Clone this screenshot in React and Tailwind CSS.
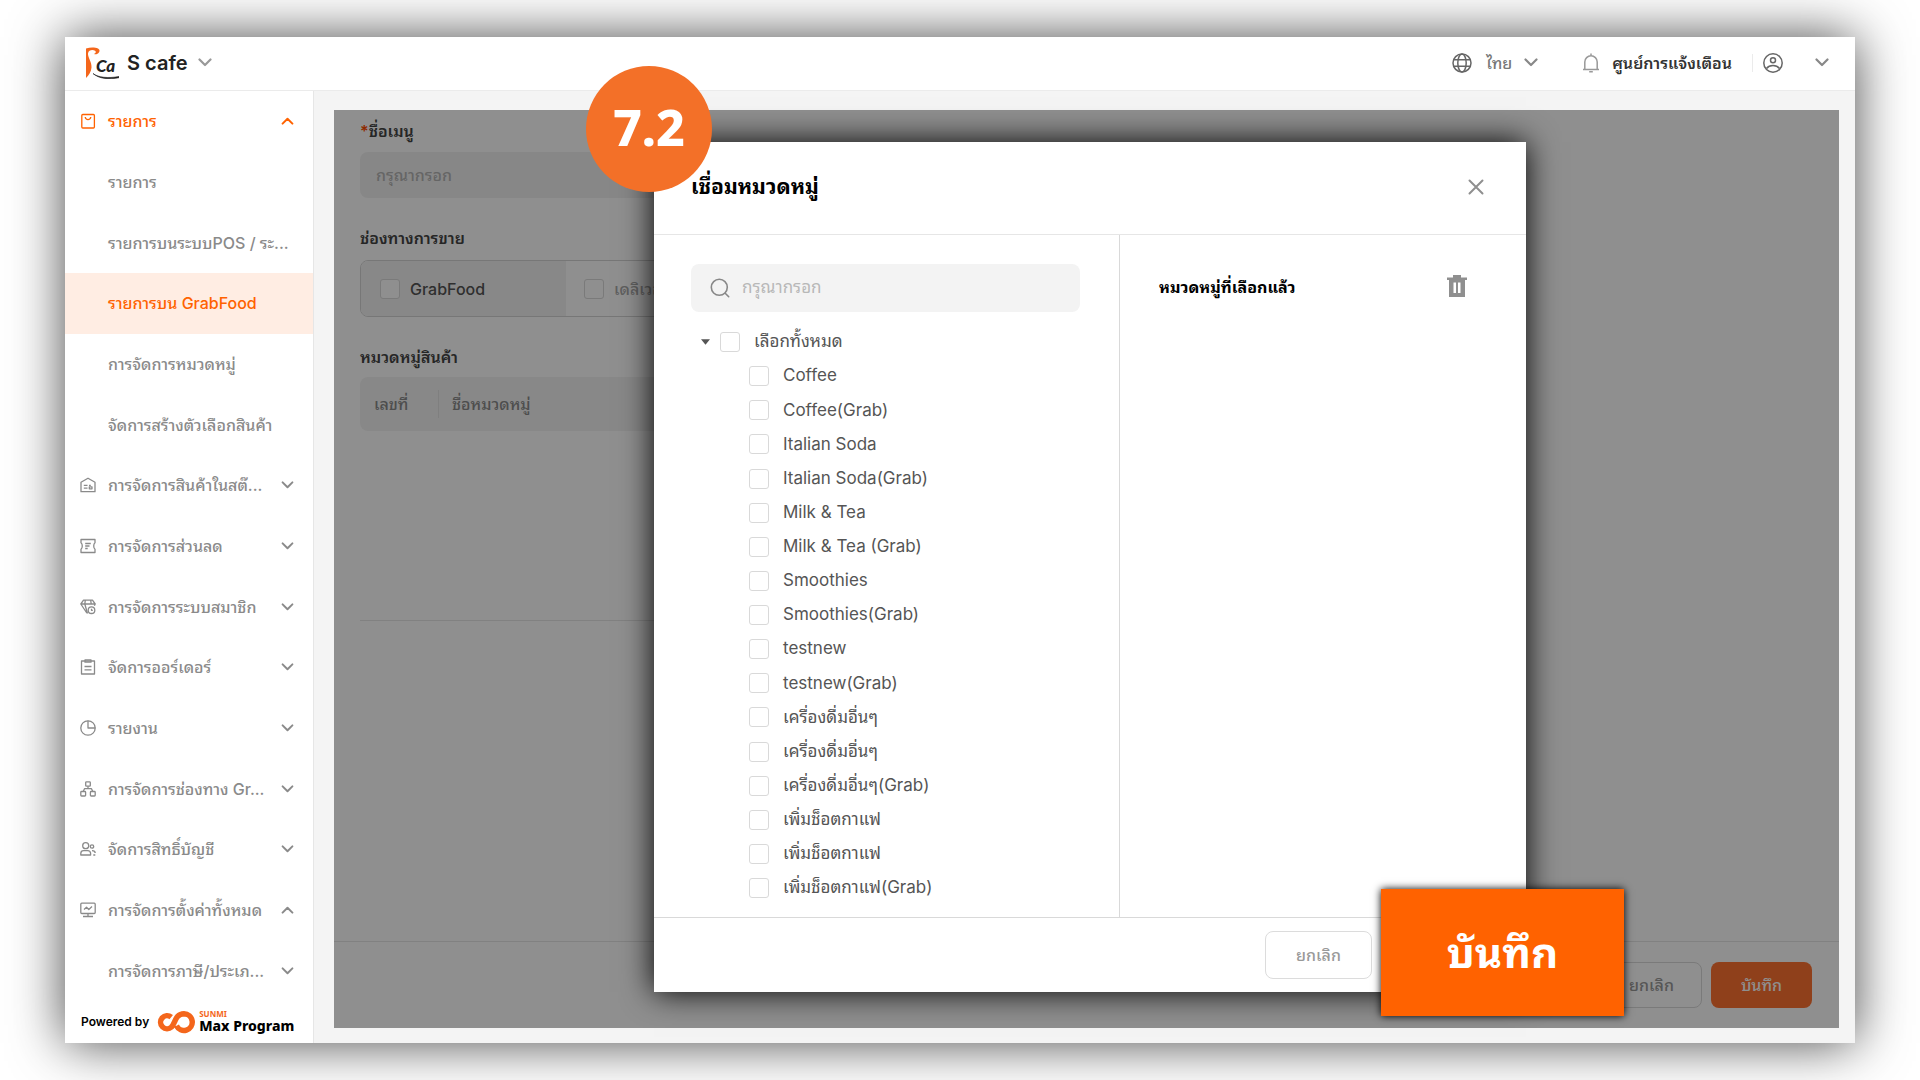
import React, { useState } from "react";

const chevronUp = "M1.5 7.5 7 2l5.5 5.5";
const chevronDown = "M1.5 1.5 7 7l5.5-5.5";

function Chevron({ up = false, className = "h-[9px] w-[14px]" }) {
  return (
    <svg viewBox="0 0 14 9" fill="none" stroke="currentColor" strokeWidth="2.2" strokeLinecap="round" strokeLinejoin="round" className={`shrink-0 ${className}`}>
      <path d={up ? chevronUp : chevronDown} />
    </svg>
  );
}

const icons = {
  bag: (
    <>
      <rect x="1.8" y="1.5" width="12.6" height="13.5" rx="1" />
      <path d="M5.2 4c.3 1.900 1.300 2.600 2.800 2.600s2.500-.7 2.800-2.600" />
    </>
  ),
  store: (
    <>
      <path d="M1 14.700V5.300L8 1.200l7 4.100v9.400z" />
      <path d="M3.800 8.300h3.700M3.800 11.200h3.700M9 8.300h1.800M9.300 9.900h2.700v1.900H9.300z" />
    </>
  ),
  coupon: (
    <>
      <path d="M1 1.500h14v3.300c-1.700 1.200-1.700 5.200 0 6.400v3.300H1v-3.300c1.700-1.200 1.700-5.200 0-6.400z" />
      <path d="M5.200 5.500h5.600M5.200 8h4.300M5.200 10.500h2.500" />
    </>
  ),
  member: (
    <>
      <path d="M3.500 1.200h9L15.200 5H.8zM.8 5l6 9M5.300 1.200 4.800 5l2.700 9.500M10.700 1.200l.5 3.800M15.200 5l-.8 1.700" />
      <circle cx="11.500" cy="11.200" r="3.300" />
      <path d="M11.500 9.800v1.500h1.300" />
    </>
  ),
  order: (
    <>
      <path d="M1.500 2h13v13h-13z" />
      <path d="M5 .8h6v2.400H5zM4.500 7.500h7M4.500 10.800h7" />
    </>
  ),
  report: (
    <>
      <circle cx="8" cy="8" r="7.200" />
      <path d="M8 .8V8h7.200" />
    </>
  ),
  channel: (
    <>
      <rect x="5.700" y=".8" width="4.600" height="4.400" rx=".8" />
      <rect x=".8" y="10.500" width="4.800" height="4.500" rx=".8" />
      <rect x="10.400" y="10.500" width="4.800" height="4.500" rx=".8" />
      <path d="M8 5.200v2.500M3.200 10.500l1.300-2.800h7l1.300 2.800" />
    </>
  ),
  account: (
    <>
      <circle cx="5.700" cy="4.700" r="3" />
      <path d="M.8 14v-1.500c0-1.800 1.200-2.800 2.800-2.800h4.200c1.600 0 2.800 1 2.800 2.800V14z" />
      <circle cx="12" cy="5.500" r="1.700" />
      <path d="M12 9.700c2 0 3.200.8 3.200 2.300M13.300 14h2" />
    </>
  ),
  monitor: (
    <>
      <rect x=".8" y="1.200" width="14.400" height="10.300" rx="1" />
      <path d="m4 7.500 2.500-2.300 2.300 2.300L12 4.500M8 11.500v2.800M3 14.500h10" />
    </>
  ),
};

const menu = [
  { icon: "bag", label: "รายการ", arrow: "up", active: true },
  { label: "รายการ" },
  { label: "รายการบนระบบPOS / ระ..." },
  { label: "รายการบน GrabFood", active: true, selected: true },
  { label: "การจัดการหมวดหมู่" },
  { label: "จัดการสร้างตัวเลือกสินค้า" },
  { icon: "store", label: "การจัดการสินค้าในสต๊...", arrow: "down" },
  { icon: "coupon", label: "การจัดการส่วนลด", arrow: "down" },
  { icon: "member", label: "การจัดการระบบสมาชิก", arrow: "down" },
  { icon: "order", label: "จัดการออร์เดอร์", arrow: "down" },
  { icon: "report", label: "รายงาน", arrow: "down" },
  { icon: "channel", label: "การจัดการช่องทาง Gr...", arrow: "down" },
  { icon: "account", label: "จัดการสิทธิ์บัญชี", arrow: "down" },
  { icon: "monitor", label: "การจัดการตั้งค่าทั้งหมด", arrow: "up" },
  { label: "การจัดการภาษี/ประเภ...", arrow: "down" },
];

const categories = [
  "Coffee",
  "Coffee(Grab)",
  "Italian Soda",
  "Italian Soda(Grab)",
  "Milk & Tea",
  "Milk & Tea (Grab)",
  "Smoothies",
  "Smoothies(Grab)",
  "testnew",
  "testnew(Grab)",
  "เครื่องดื่มอื่นๆ",
  "เครื่องดื่มอื่นๆ",
  "เครื่องดื่มอื่นๆ(Grab)",
  "เพิ่มช็อตกาแฟ",
  "เพิ่มช็อตกาแฟ",
  "เพิ่มช็อตกาแฟ(Grab)",
];

const checkbox =
  "h-5 w-5 shrink-0 appearance-none rounded-[3px] border border-[#d9d9d9] bg-white checked:border-[#ff6200] checked:bg-[#ff6200]";

function Header() {
  return (
    <header className="flex h-[54px] shrink-0 items-center border-b border-[#ebebeb] bg-white pr-[26px] pb-0.5 pl-5">
      <svg viewBox="0 0 34 32" className="h-8 w-[34px]" aria-label="S Ca">
        <path d="M1 1.500C5 .2 10 .2 13 1.500c2 1 2 3 .5 4.500-1.200 1.200-3 1.500-4.500 1 1.800-.8 2.500-2.300 1-3.300C7.500 2.500 3.500 3 3 6.500c-.3 4 4 8.500 3.500 14C6.200 25 4 28 1 31z" fill="#f4661b" />
        <text x="11" y="25" fontSize="17" fontWeight="900" fontStyle="italic" fontFamily="Lato, sans-serif" fill="#222">Ca</text>
        <path d="M8 26.500c5 4 15 5 26 3v1.200c-10 2-20 1.200-26-4.200z" fill="#222" stroke="#222" strokeWidth=".6" />
      </svg>
      <button className="ml-2 flex items-center gap-2.5 text-xl font-semibold text-[#222]">
        S cafe
        <Chevron className="h-[9px] w-[14px] text-[#999]" />
      </button>

      <button className="ml-auto flex items-center text-base font-medium text-[#777]">
        <svg viewBox="0 0 20 20" fill="none" stroke="#666" strokeWidth="1.500" className="mr-3.5 h-5 w-5">
          <circle cx="10" cy="10" r="9" />
          <ellipse cx="10" cy="10" rx="4.200" ry="9" />
          <path d="M1.700 6.800h16.600M1.700 13.200h16.600" />
        </svg>
        ไทย
        <Chevron className="ml-3 h-[9px] w-[14px] text-[#888]" />
      </button>
      <button className="ml-11 flex items-center gap-3 text-base font-semibold text-[#333]">
        <svg viewBox="0 0 18 20" fill="none" stroke="#999" strokeWidth="1.500" className="h-5 w-[18px]">
          <path d="M1 16.500h16M2.800 16.500V9a6.200 6.200 0 0 1 12.400 0v7.500M9 .5v2M7.200 18.800h3.600" />
        </svg>
        ศูนย์การแจ้งเตือน
      </button>
      <span className="ml-5 h-[18px] w-px bg-[#ebebeb]" />
      <button className="ml-2.5 flex items-center gap-8" aria-label="account">
        <svg viewBox="0 0 20 20" fill="none" stroke="#666" strokeWidth="1.500" className="h-5 w-5">
          <circle cx="10" cy="10" r="9.200" />
          <circle cx="10" cy="7.300" r="2.500" />
          <path d="M3.500 15.500c1.500-2 3.500-3 6.500-3s5 1 6.500 3" />
        </svg>
        <Chevron className="h-[9px] w-[14px] text-[#888]" />
      </button>
    </header>
  );
}

function Sidebar() {
  return (
    <aside className="flex w-[249px] shrink-0 flex-col border-r border-[#e6e6e6] bg-white">
      <nav className="flex flex-1 flex-col">
        {menu.map((item, i) => (
          <a
            key={i}
            href="#"
            className={`flex flex-1 items-center pr-[19px] pl-[15px] text-base font-medium whitespace-nowrap ${
              item.active ? "text-[#ff6200]" : "text-[#8a8a8a]"
            } ${item.selected ? "bg-[#ffede3]" : ""}`}
          >
            <span className="w-7 shrink-0">
              {item.icon && (
                <svg viewBox="0 0 16 16" fill="none" stroke="currentColor" strokeWidth="1.300" strokeLinejoin="round" className="h-4 w-4">
                  {icons[item.icon]}
                </svg>
              )}
            </span>
            <span className="flex-1">{item.label}</span>
            {item.arrow && <Chevron up={item.arrow === "up"} className="h-2 w-[13px]" />}
          </a>
        ))}
      </nav>
      <div className="flex h-[42px] items-center pl-4 text-xs font-semibold text-black">
        Powered by
        <svg viewBox="0 0 40 24" fill="none" stroke="#f4661b" strokeWidth="5.500" className="ml-2 h-6 w-10">
          <path d="M14.200 7.200A6.500 6.500 0 1 0 14.500 17C18.500 13 18 4 27 3.800a8.300 8.300 0 1 1-7.500 12" />
        </svg>
        <div className="ml-0.5 flex flex-col font-['Noto_Sans']">
          <span className="text-[8px] leading-2 font-bold text-[#f4661b]">SUNMI</span>
          <span className="text-sm leading-4 font-extrabold">Max Program</span>
        </div>
      </div>
    </aside>
  );
}

function MenuForm() {
  return (
    <form className="flex h-full flex-col text-base">
      <div className="w-[800px] flex-1 pt-2 pl-[26px]">
        <label htmlFor="menuName" className="block h-[34px] pt-px leading-6 font-semibold text-[#444]">
          <span className="text-[#ff4b00]">*</span>ชื่อเมนู
        </label>
        <input
          id="menuName"
          placeholder="กรุณากรอก"
          className="block h-[46px] w-full rounded-lg bg-[#f1f1f1] px-4 font-medium placeholder:text-[#b5b5b5]"
        />
        <h3 className="mt-7 leading-6 font-semibold text-[#444]">ช่องทางการขาย</h3>
        <div className="mt-2.5 flex h-[57px] overflow-hidden rounded-lg border border-[#d5d5d5] font-medium">
          <label className="flex w-[205px] items-center gap-2.5 bg-[#f3f3f3] pl-[19px] text-[#555]">
            <input type="checkbox" className={checkbox} />
            GrabFood
          </label>
          <label className="flex items-center gap-2.5 pl-[18px] text-[#aaa]">
            <input type="checkbox" className={checkbox} />
            เดลิเวอรี่
          </label>
        </div>
        <h3 className="mt-7 leading-6 font-semibold text-[#444]">หมวดหมู่สินค้า</h3>
        <div className="mt-2 h-[244px] border-b border-[#e6e6e6]">
          <table className="w-full overflow-hidden rounded-lg bg-[#f3f3f3] text-left">
            <thead>
              <tr className="h-[54px] text-[#8a8a8a]">
                <th className="w-[78px] pl-3.5 font-medium">เลขที่</th>
                <th className="font-medium">
                  <span className="border-l border-[#e3e3e3] py-1 pl-[13px]">ชื่อหมวดหมู่</span>
                </th>
              </tr>
            </thead>
          </table>
        </div>
      </div>
      <div className="flex h-[87px] items-center justify-end gap-[9px] border-t border-[#e6e6e6] pr-[27px] font-medium">
        <button type="button" className="h-[46px] w-[101px] rounded-lg border border-[#d9d9d9] text-[#999]">
          ยกเลิก
        </button>
        <button type="button" className="h-[46px] w-[101px] rounded-lg bg-[#ff7230] text-white">
          บันทึก
        </button>
      </div>
    </form>
  );
}

function CategoryDialog() {
  const [checked, setChecked] = useState([]);

  const toggle = (i) =>
    setChecked(checked.includes(i) ? checked.filter((c) => c !== i) : [...checked, i]);
  const toggleAll = () =>
    setChecked(checked.length === categories.length ? [] : categories.map((_, i) => i));

  return (
    <div
      role="dialog"
      aria-label="เชื่อมหมวดหมู่"
      className="absolute top-8 right-[313px] bottom-9 left-80 flex flex-col bg-white shadow-[0_0_30px_#000]"
    >
      <div className="flex h-[93px] shrink-0 items-center justify-between border-b border-[#e6e6e6] pr-[42px] pb-0.5 pl-[37px]">
        <h2 className="text-[21px] font-bold text-black">เชื่อมหมวดหมู่</h2>
        <button aria-label="close" className="text-[#8f8f8f]">
          <svg viewBox="0 0 16 16" fill="none" stroke="currentColor" strokeWidth="2" strokeLinecap="round" className="h-4 w-4">
            <path d="m1.500 1.500 13 13M14.500 1.500l-13 13" />
          </svg>
        </button>
      </div>

      <div className="flex flex-1">
        <div className="flex flex-1 flex-col border-r border-[#d9d9d9] pt-[29px] pr-[39px] pb-3 pl-[37px]">
          <label className="flex h-12 shrink-0 items-center gap-3 rounded-lg bg-[#f3f3f3] px-[19px]">
            <svg viewBox="0 0 20 20" fill="none" stroke="#888" strokeWidth="1.600" strokeLinecap="round" className="h-5 w-5">
              <circle cx="9.300" cy="9.300" r="8" />
              <path d="m15.200 15.200 3.500 3.500" />
            </svg>
            <input placeholder="กรุณากรอก" aria-label="กรุณากรอก" className="flex-1 text-[17px] placeholder:text-[#b8b8b8]" />
          </label>
          <ul className="mt-[13px] flex flex-1 flex-col text-[17px] text-[#555]">
            <li className="flex flex-1 items-center pl-2.5">
              <svg viewBox="0 0 10 6" fill="#555" className="mr-2.5 h-1.5 w-[9px]">
                <path d="M0 0h10L5 6z" />
              </svg>
              <label className="flex items-center gap-3.5">
                <input type="checkbox" checked={checked.length === categories.length} onChange={toggleAll} className={checkbox} />
                เลือกทั้งหมด
              </label>
            </li>
            {categories.map((name, i) => (
              <li key={i} className="flex flex-1 items-center pl-[58px]">
                <label className="flex items-center gap-3.5">
                  <input type="checkbox" checked={checked.includes(i)} onChange={() => toggle(i)} className={checkbox} />
                  {name}
                </label>
              </li>
            ))}
          </ul>
        </div>
        <div className="flex w-[406px] items-start justify-between pt-10 pr-[59px] pl-[39px]">
          <h3 className="leading-6 font-bold text-black">หมวดหมู่ที่เลือกแล้ว</h3>
          <button aria-label="delete" onClick={() => setChecked([])}>
            <svg viewBox="0 0 20 22" fill="#8f8f8f" className="h-[22px] w-5">
              <path fillRule="evenodd" d="M6 0h8v2.500h6V5h-2v17H2V5H0V2.500h6zM6.500 7.500v10.500H9V7.500zM11 7.500v10.500h2.500V7.500z" />
            </svg>
          </button>
        </div>
      </div>

      <div className="flex h-[75px] shrink-0 items-center border-t border-[#d9d9d9] pr-[154px]">
        <button className="ml-auto h-12 w-[107px] rounded-lg border border-[#dcdcdc] text-base font-medium text-[#999]">
          ยกเลิก
        </button>
      </div>
      <button className="absolute -right-[98px] -bottom-6 h-[127px] w-[243px] bg-[#ff6200] text-[42px] font-bold text-white shadow-[0_0_8px_#000]">
        บันทึก
      </button>
      <div className="absolute -top-[76px] -left-[68px] flex h-[126px] w-[126px] items-center justify-center rounded-full bg-[#f37028] pb-1 font-['Noto_Sans'] text-[50px] font-extrabold text-white">
        7.2
      </div>
    </div>
  );
}

export default function App() {
  return (
    <div className="flex h-screen min-h-[960px] overflow-hidden bg-white px-[65px] py-[37px] font-['Inter','Noto_Sans_Thai_Looped','Noto_Sans_Thai',sans-serif]">
      <div className="flex flex-1 flex-col bg-[#f4f4f4] shadow-[0_0_50px_rgba(0,0,0,0.72)]">
        <Header />
        <div className="flex flex-1">
          <Sidebar />
          <main className="flex-1 pt-[19px] pr-4 pb-[15px] pl-5">
            <div className="relative h-full bg-white">
              <MenuForm />
              <div className="absolute inset-0 bg-black/44" />
              <CategoryDialog />
            </div>
          </main>
        </div>
      </div>
    </div>
  );
}
